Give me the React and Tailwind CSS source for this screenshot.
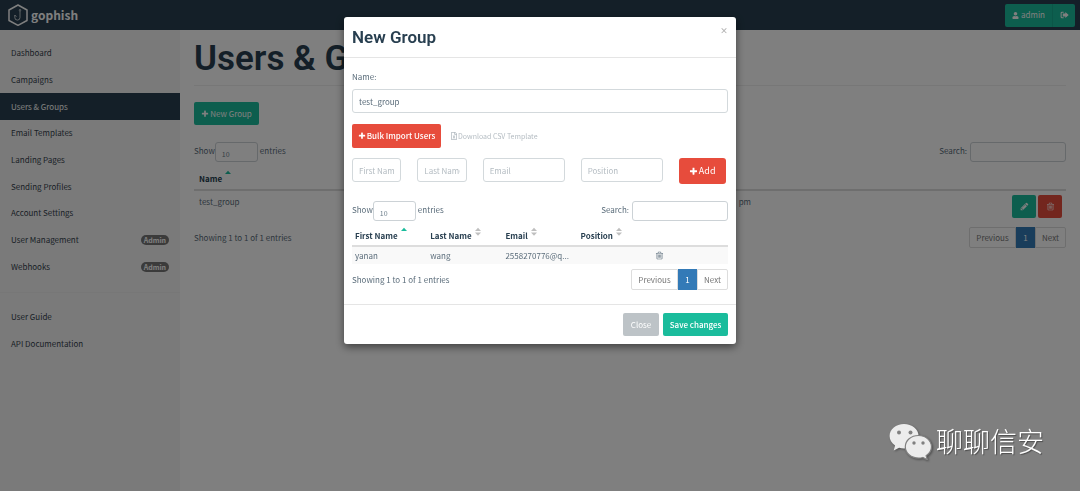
import { FaUser, FaRegFileExcel } from 'react-icons/fa';

const PLUS =
  'M1600 736v192q0 40-28 68t-68 28h-416v416q0 40-28 68t-68 28h-192q-40 0-68-28t-28-68v-416h-416q-40 0-68-28t-28-68v-192q0-40 28-68t68-28h416v-416q0-40 28-68t68-28h192q40 0 68 28t28 68v416h416q40 0 68 28t28 68z';
const PENCIL =
  'M491 1536l91-91-235-235-91 91v107h128v128h107zm523-928q0-22-22-22-10 0-17 7l-542 542q-7 7-7 17 0 22 22 22 10 0 17-7l542-542q7-7 7-17zm-54-192l416 416-832 832h-416v-416zm683 96q0 53-37 90l-166 166-416-416 166-165q36-38 90-38 53 0 91 38l235 234q37 39 37 91z';
const TRASH =
  'M704 736v576q0 14-9 23t-23 9h-64q-14 0-23-9t-9-23v-576q0-14 9-23t23-9h64q14 0 23 9t9 23zm256 0v576q0 14-9 23t-23 9h-64q-14 0-23-9t-9-23v-576q0-14 9-23t23-9h64q14 0 23 9t9 23zm256 0v576q0 14-9 23t-23 9h-64q-14 0-23-9t-9-23v-576q0-14 9-23t23-9h64q14 0 23 9t9 23zm128 724v-948h-896v948q0 22 7 40.5t14.5 27 10.5 8.5h832q3 0 10.5-8.5t14.5-27 7-40.5zm-672-1076h448l-48-117q-7-9-17-11h-317q-10 2-17 11zm928 32v64q0 14-9 23t-23 9h-96v948q0 83-47 143.5t-113 60.5h-832q-66 0-113-58.5t-47-141.5v-952h-96q-14 0-23-9t-9-23v-64q0-14 9-23t23-9h309l70-167q15-37 54-63t79-26h320q40 0 79 26t54 63l70 167h309q14 0 23 9t9 23z';

function Icon({ d, className }) {
  return (
    <svg viewBox="0 0 1792 1792" fill="currentColor" aria-hidden="true" className={className}>
      <path d={d} />
    </svg>
  );
}

function SignOut() {
  return (
    <svg viewBox="0 0 16 14" aria-hidden="true" className="h-2 w-[9px]">
      <path d="M6.5 2H3.6A1.6 1.6 0 0 0 2 3.6v6.8A1.6 1.6 0 0 0 3.6 12h2.9" fill="none" stroke="currentColor" strokeWidth="1.8" />
      <path d="M5 4.500h4.500V1.500L15.500 7l-6 5.500v-3H5z" fill="currentColor" />
    </svg>
  );
}

function Logo() {
  return (
    <svg viewBox="0 0 20 22" fill="none" stroke="currentColor" aria-hidden="true" className="h-[22px] w-5">
      <path d="M10 1 19 6v10.5L10 21.3 1 16.5V6z" strokeWidth="1.5" strokeLinejoin="round" />
      <circle cx="12" cy="6.2" r=".8" strokeWidth=".6" />
      <path d="M12 7v6.500q0 2.600-2.600 2.600T6.800 13.500V11l1.600 1.700" strokeWidth=".7" />
    </svg>
  );
}

function SortArrows({ active }) {
  return (
    <svg viewBox="0 0 6 10" aria-hidden="true" className="h-[10px] w-[6px] shrink-0">
      <path d="M0 4 3 .8 6 4z" fill={active ? '#1abc9c' : '#bfbfbf'} />
      {!active && <path d="M0 5.6 3 8.800 6 5.600z" fill="#bfbfbf" />}
    </svg>
  );
}

function TableControls({ id }) {
  return (
    <div className="flex items-start justify-between text-[8px] leading-[18px]">
      <label htmlFor={id + '-length'} className="flex">
        Show
        <select
          id={id + '-length'}
          className="mr-0.5 h-5 w-[43px] appearance-none rounded-[3px] border border-[#ccd2d6] bg-white px-1.5 pt-1 text-[7px] leading-3 text-[#6b7d8a]"
        >
          <option>10</option>
        </select>
        entries
      </label>
      <label htmlFor={id + '-search'} className="flex gap-[3px]">
        Search:
        <input
          id={id + '-search'}
          type="search"
          className="h-5 w-24 rounded-[3px] border border-[#ccd2d6] bg-white px-1.5"
        />
      </label>
    </div>
  );
}

function Pagination() {
  return (
    <nav className="flex h-[21px] text-[8px] text-[#777]">
      <button type="button" className="w-[47px] rounded-l-[2px] border border-[#ddd]">Previous</button>
      <button type="button" className="w-[19px] bg-[#337ab7] text-white">1</button>
      <button type="button" className="w-[31px] rounded-r-[2px] border border-[#ddd]">Next</button>
    </nav>
  );
}

const links = ['Dashboard', 'Campaigns', 'Users & Groups', 'Email Templates', 'Landing Pages', 'Sending Profiles', 'Account Settings', 'User Management', 'Webhooks'];
const adminOnly = ['User Management', 'Webhooks'];

function SideLink({ label }) {
  const active = label === 'Users & Groups';
  return (
    <a
      href="#"
      className={
        active
          ? 'flex items-center justify-between bg-[#283f50] px-[11px] text-white'
          : 'flex items-center justify-between px-[11px] text-[#34424d]'
      }
    >
      {label}
      {adminOnly.includes(label) && (
        <span className="rounded-full bg-[#777] px-[3px] text-[7px] leading-[10px] font-bold text-white">Admin</span>
      )}
    </a>
  );
}

function Page() {
  return (
    <div className="flex min-h-screen flex-col bg-white">
      <header className="flex h-[30px] items-center justify-between bg-[#283f50] pr-[5px] pl-2 text-white">
        <a href="#" className="flex items-center gap-[3px] text-[12px] leading-5 font-bold">
          <Logo />
          gophish
        </a>
        <div className="flex h-[23px] text-[8px]">
          <button type="button" className="flex w-12 items-center justify-center gap-0.5 rounded-l-[2px] border-r border-[#18ad90] bg-[#1abc9c]">
            <FaUser className="size-[7px]" />
            admin
          </button>
          <button type="button" aria-label="Sign out" className="flex w-[22px] items-center justify-center rounded-r-[2px] bg-[#1abc9c]">
            <SignOut />
          </button>
        </div>
      </header>
      <div className="flex grow">
        <aside className="w-1/6 shrink-0 bg-[#f5f5f5] pt-[10px] text-[8px]">
          <nav className="grid h-[240px] auto-rows-fr">
            {links.map((l) => (
              <SideLink key={l} label={l} />
            ))}
          </nav>
          <hr className="mt-3 mb-[11px] border-[#eee]" />
          <nav className="grid h-[53px] auto-rows-fr">
            <SideLink label="User Guide" />
            <SideLink label="API Documentation" />
          </nav>
        </aside>
        <main className="min-w-0 grow px-[14px]">
          <h1 className="border-b border-[#eee] pt-[9px] pb-[7px] font-[Roboto,sans-serif] text-[35px] leading-[39px] font-semibold text-[#283f50]">
            Users &amp; Groups
          </h1>
          <button type="button" className="mt-4 flex h-[23px] w-[65px] items-center justify-center gap-px rounded-[2px] bg-[#1abc9c] text-[8px] text-white">
            <Icon d={PLUS} className="size-2" />
            New Group
          </button>
          <div className="mt-[17px]">
            <TableControls id="groups" />
          </div>
          <table className="mt-[7px] w-full table-fixed text-left text-[8px]">
            <thead>
              <tr className="border-b-2 border-[#ddd] text-[#283f50]">
                <th className="h-[21px] w-[62%] px-[5px] font-bold">
                  <span className="flex items-start gap-[3px] leading-[18px]">
                    Name
                    <SortArrows active />
                  </span>
                </th>
                <th className="w-1/4" />
                <th />
              </tr>
            </thead>
            <tbody>
              <tr className="align-top">
                <td className="px-[5px] pt-1 leading-[14px]">test_group</td>
                <td className="px-1 pt-1 leading-[14px]">pm</td>
                <td className="h-[34px] px-1 pt-1">
                  <div className="flex justify-end gap-0.5 text-white">
                    <button type="button" aria-label="Edit group" className="flex h-[23px] w-6 items-center justify-center rounded-[2px] bg-[#1abc9c]">
                      <Icon d={PENCIL} className="size-[9px]" />
                    </button>
                    <button type="button" aria-label="Delete group" className="flex h-[23px] w-6 items-center justify-center rounded-[2px] bg-[#e74c3c]">
                      <Icon d={TRASH} className="size-[9px]" />
                    </button>
                  </div>
                </td>
              </tr>
            </tbody>
          </table>
          <div className="mt-[3px] flex items-center justify-between text-[8px]">
            <p>Showing 1 to 1 of 1 entries</p>
            <Pagination />
          </div>
        </main>
      </div>
    </div>
  );
}

const field = 'h-6 w-full rounded-[3px] border border-[#d3d9dc] px-1.5 text-[8px] placeholder:text-[#b4bcc2]';

function NewGroupDialog() {
  return (
    <section role="dialog" aria-label="New Group" className="w-[392px] rounded-[3px] bg-white text-[8px] text-[#5a6c7a] shadow-[0_3px_9px_rgba(0,0,0,0.5)]">
      <div className="flex items-start justify-between border-b border-[#e5e5e5] p-2">
        <h2 className="font-[Roboto,sans-serif] text-[17px] leading-6 font-semibold text-[#283f50]">New Group</h2>
        <button type="button" aria-label="Close dialog" className="text-[8px] leading-3 font-bold text-[#b0b0b0]">×</button>
      </div>
      <div className="px-2 pt-3 pb-[14px]">
        <label htmlFor="group-name" className="block leading-[14px]">Name:</label>
        <input id="group-name" defaultValue="test_group" className={field + ' mt-[5px]'} />
        <div className="mt-[11px] flex items-center gap-[9px]">
          <button type="button" className="flex h-6 w-[89px] items-center justify-center gap-px rounded-[2px] bg-[#e74c3c] text-[8px] font-medium text-white">
            <Icon d={PLUS} className="size-2" />
            Bulk Import Users
          </button>
          <a href="#" className="flex items-center text-[7px] text-[#b4bcc2]">
            <FaRegFileExcel className="size-2" />
            Download CSV Template
          </a>
        </div>
        <div className="-mx-2 mt-[10px] grid grid-cols-12">
          <div className="col-span-2 px-2"><input aria-label="First Name" placeholder="First Name" className={field} /></div>
          <div className="col-span-2 px-2"><input aria-label="Last Name" placeholder="Last Name" className={field} /></div>
          <div className="col-span-3 px-2"><input aria-label="Email" placeholder="Email" className={field} /></div>
          <div className="col-span-3 px-2"><input aria-label="Position" placeholder="Position" className={field} /></div>
          <div className="col-span-2 px-2">
            <button type="button" className="flex h-[26px] w-[47px] items-center justify-center gap-px rounded-[3px] bg-[#e74c3c] text-[9px] text-white">
              <Icon d={PLUS} className="size-[9px]" />
              Add
            </button>
          </div>
        </div>
        <div className="mt-[17px]">
          <TableControls id="targets" />
        </div>
        <table className="mt-[5px] w-full table-fixed text-left text-[8px]">
          <thead>
            <tr className="border-b-2 border-[#ddd] text-[#283f50]">
              {['First Name', 'Last Name', 'Email', 'Position'].map((h, i) => (
                <th key={h} className="h-5 px-[3px] font-bold">
                  <span className="flex items-start gap-[3px] leading-[18px]">
                    {h}
                    <SortArrows active={i === 0} />
                  </span>
                </th>
              ))}
              <th />
            </tr>
          </thead>
          <tbody>
            <tr className="bg-[#f9f9f9]">
              <td className="h-[18px] px-[3px]">yanan</td>
              <td className="px-[3px]">wang</td>
              <td className="px-[3px] whitespace-nowrap">2558270776@q...</td>
              <td />
              <td className="px-0.5">
                <button type="button" aria-label="Remove user" className="flex">
                  <Icon d={TRASH} className="size-[9px]" />
                </button>
              </td>
            </tr>
          </tbody>
        </table>
        <div className="mt-[5px] flex items-center justify-between">
          <p>Showing 1 to 1 of 1 entries</p>
          <Pagination />
        </div>
      </div>
      <div className="flex justify-end gap-1 border-t border-[#e5e5e5] p-2 text-white">
        <button type="button" className="h-[23px] w-9 rounded-[2px] bg-[#bdc3c7]">Close</button>
        <button type="button" className="h-[23px] w-[65px] rounded-[2px] bg-[#1abc9c] font-medium">Save changes</button>
      </div>
    </section>
  );
}

function Watermark() {
  return (
    <div className="fixed right-9 bottom-[30px] flex items-center gap-1 text-[27px] leading-10 font-light text-white [text-shadow:1px_1px_1px_rgba(0,0,0,0.4)]">
      <svg viewBox="0 0 43 37" aria-hidden="true" className="h-[37px] w-[43px] drop-shadow-[1px_1px_1px_rgba(0,0,0,0.4)]">
        <path d="M15 1C7 1 .6 6.400.6 13c0 3.800 2 7.200 5.500 9.500L4.700 27.500l5.400-2.700c1.600.4 3.200.6 4.900.6 8 0 14.600-5.600 14.600-12.400S23 1 15 1z" fill="#ececec" />
        <path d="M29.500 12.500c-7.400 0-13.200 5-13.200 11.300s5.800 11.300 13.200 11.300c1.500 0 3-.2 4.300-.6l4.600 2.300-1.300-4c3.300-2.100 5.400-5.300 5.400-9 0-6.300-5.700-11.300-13-11.300z" fill="#ececec" stroke="#808080" strokeWidth="1.200" />
        <g fill="#808080">
          <circle cx="10" cy="9.500" r="2" />
          <circle cx="21.500" cy="9.500" r="2" />
          <circle cx="25" cy="20" r="1.700" />
          <circle cx="34" cy="20" r="1.700" />
        </g>
      </svg>
      聊聊信安
    </div>
  );
}

export default function App() {
  return (
    <div className="font-['Noto_Sans_CJK_SC','Noto_Sans',sans-serif] text-[#5a6c7a]">
      <Page />
      <div className="fixed inset-0 flex items-start justify-center overflow-auto bg-black/50 pt-[17px]">
        <NewGroupDialog />
      </div>
      <Watermark />
    </div>
  );
}
